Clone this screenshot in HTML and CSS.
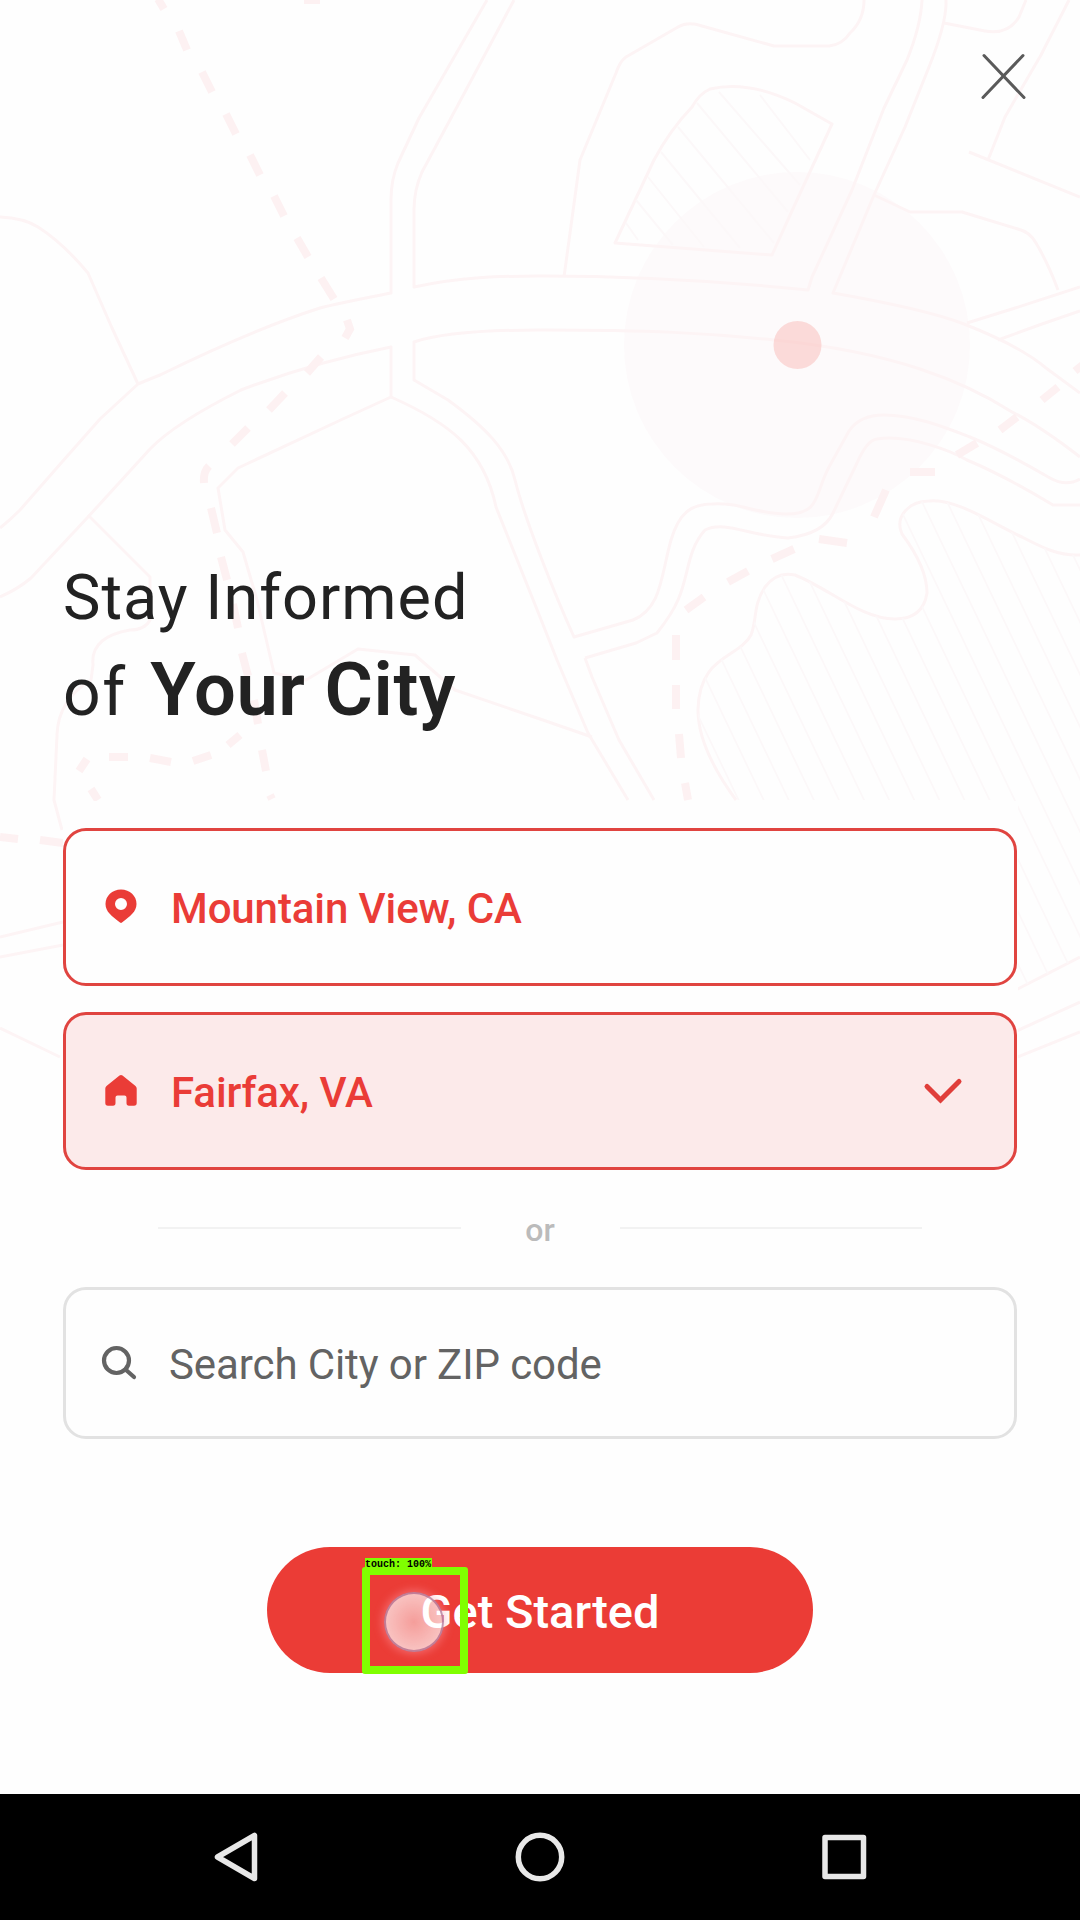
FILE: index.html
```html
<!DOCTYPE html>
<html lang="en">
<head>
<meta charset="utf-8">
<title>Stay Informed of Your City</title>
<link rel="stylesheet" href="styles.css">
</head>
<body>
<div class="screen">
  <svg class="map" viewBox="0 0 1080 1200" aria-hidden="true">
    <defs>
      <pattern id="hatch" width="25.1" height="40" patternUnits="userSpaceOnUse" patternTransform="translate(838 800) skewX(25.6)">
        <path class="hatch" d="M1 0V40"/>
      </pattern>
    </defs>
    <circle class="halo" cx="797" cy="345" r="173"/>
    <g class="roads">
      <path d="M487 0L419 118L398 163Q391 180 391 200V293C350 301 334 304 320 308C270 324 207 352 160 375C145 381 138 384 138 384L100 419L62 462L20 510Q10 520 0 528"/>
      <path d="M514 0L466 90L422 172Q414 190 414 210V287C460 277 500 276 540 276C625 276 710 280 808 290L812 277L852 190L884 108L907 60Q921 25 922 0"/>
      <path d="M946 0Q947 22 929 67L905 127L874 195L833 293Q925 309 964 324Q1020 346 1046 368L1080 393"/>
      <path d="M944 23L985 31Q1008 35 1019 17L1026 0M1069 0L1041 55L1005 117L988 160M969 152L1080 197M874 195L910 212H962L1018 229Q1030 232 1036 243Q1048 263 1058 290M967 323L1012 309L1080 287M998 340L1042 324L1080 311"/>
      <path d="M0 597Q18 589 31 578L88 517L150 449Q175 423 241 390C270 379 320 361 391 347V397L345 418L238 468L218 488L225 530L243 552L257 600L274 673L306 680L358 649L415 655L455 690L540 719L592 737"/>
      <path d="M391 397C450 423 484 450 496 507L540 617L557 660L588 733L628 800"/>
      <path d="M540 330Q450 330 414 342V380L448 400C485 427 508 450 515 480C525 520 555 595 574 637L633 620C662 608 661 575 671 540C679 513 691 504 712 504C738 502 758 514 786 514C821 514 814 495 829 467L849 431C857 419 869 415 884 415C914 415 944 427 970 437Q1002 450 1050 478Q1066 487 1080 479"/>
      <path d="M585 658L636 643L657 633Q672 614 678 600C689 575 687 550 705 530C725 520 749 536 788 538Q823 534 833 513L857 463Q867 440 877 439C910 434 953 452 967 460Q1005 476 1053 505H1080M585 658L592 677L619 740L654 800"/>
      <path d="M540 330C650 330 708 333 774 340C895 352 965 382 1012 412Q1040 426 1080 457"/>
      <path d="M0 217Q24 218 38 227Q63 243 88 273L112 328L138 384M88 515L150 577V620Q145 630 130 630Q90 637 93 665L91 680Q58 700 57 735L54 800L62 830M0 937L63 922M0 957L63 945M0 1028L60 1057"/>
      <path d="M564 277L580 160L616 73Q620 61 626 57L678 27Q688 21 702 26L774 46H829Q842 45 850 33Q864 20 864 0"/>
      <path d="M615 243Q633 205 654 160Q670 130 692 107Q699 94 710 89Q748 80 795 103L832 124L791 213L772 255Z"/>
      <path d="M736 800C714 770 698 738 698 710C699 655 738 659 751 635C757 620 753 605 765 587Q777 571 795 575C830 589 861 619 895 619Q923 619 927 593C927 575 917 554 902 534C894 516 910 501 929 501C956 497 1000 528 1022 537C1043 548 1059 556 1080 555"/>
      <path d="M1010 993L1080 957M1010 1034L1080 1002M1010 1060L1080 1032"/>
    </g>
    <path class="park-fill" d="M736 800C714 770 698 738 698 710C699 655 738 659 751 635C757 620 753 605 765 587Q777 571 795 575C830 589 861 619 895 619Q923 619 927 593C927 575 917 554 902 534C894 516 910 501 929 501C956 497 1000 528 1022 537C1043 548 1059 556 1080 555V957L1010 993V800Z"/>
    <path class="hatch" d="M760 95L810 160M719 92L800 185M697 103L788 212M678 127L774 243M661 152L740 248M648 177L704 247M636 200L673 245M626 223L638 240"/>
    <g class="dashes">
      <path d="M158 -1L164 9M179 31L187 50M202 72L212 92M226 114L236 134M250 155L260 175M274 196L284 216M297 238L308 257M321 278L334 299M304 0H320"/>
      <path d="M347 320L350 329L345 338M321 357L307 373M285 393L269 410M248 428L232 444M209 466Q203 472 204 483M211 508L217 533M221 557L227 580M233 604L238 628M242 653L248 676M254 700L258 724M262 750L266 771M270 795L272 799"/>
      <path d="M240 735L228 745M211 755L193 761M171 762L150 758M128 757H109M87 759L79 771M91 789L98 800M0 837L18 839M40 840L63 843"/>
      <path d="M688 800L685 783M681 758L679 734M676 709V685M676 660V635M686 610L704 597M728 582L748 571M772 559L794 549M819 539L847 543M874 517L886 490M910 472H935M957 455L977 443M1000 430L1017 417M1042 400L1058 387M1075 371L1085 363"/>
    </g>
    <circle class="pin" cx="797.5" cy="345" r="24"/>
    <path class="cover" d="M63 801H1018V1200H63Z"/>
  </svg>

  <header class="top">
    <button class="close" aria-label="Close">
      <svg width="46" height="48" viewBox="0 0 46 48"><path d="M3 2.500L43 44.500M42 2.500L2 44.500"/></svg>
    </button>
  </header>

  <main class="content">
    <h1 class="title">Stay Informed<br><span class="of">of</span> <strong>Your City</strong></h1>

    <div class="choices">
      <button class="choice">
        <svg class="icon" width="32" height="36" viewBox="0 0 32 36"><path fill-rule="evenodd" d="M16 0.500C7 0.500 0.500 7 0.500 15C0.500 23 7 27 15 33.500Q16 34.300 17 33.500C25 27 31.500 23 31.500 15C31.500 7 25 .5 16 .5ZM16 9A6 6 0 1 1 16 21A6 6 0 1 1 16 9Z"/></svg>
        <span class="city">Mountain View, CA</span>
      </button>
      <button class="choice selected">
        <svg class="icon" width="32" height="36" viewBox="0 0 32 36"><path d="M14.500 2.500Q16 1.300 17.500 2.500L30.500 13Q31.700 14 31.700 15.500V30Q31.700 32.700 29 32.700H24Q21.500 32.700 21.500 30V24.500Q21.500 22.500 19.500 22.500H12.500Q10.500 22.500 10.500 24.500V30Q10.500 32.700 8 32.700H3Q.3 32.700 .3 30V15.500Q.3 14 1.500 13Z"/></svg>
        <span class="city">Fairfax, VA</span>
        <svg class="check" width="40" height="28" viewBox="0 0 40 28"><path d="M4 9.500L17.500 23L36 4.500"/></svg>
      </button>
    </div>

    <div class="divider"><span class="or">or</span></div>

    <label class="search">
      <svg class="glass" width="36" height="36" viewBox="0 0 36 36"><circle cx="15.500" cy="15.500" r="12.500"/><path d="M24.500 24.500L33 32"/></svg>
      <span class="hint">Search City or ZIP code</span>
    </label>

    <button class="start">Get Started
      <span class="touch-dot"></span>
      <span class="touch-box"><span class="touch-label">touch: 100%</span></span>
    </button>
  </main>

  <nav class="navbar">
    <svg width="50" height="54" viewBox="0 0 50 54"><path d="M6.500 27L43.500 5.500V48.500Z"/></svg>
    <svg width="54" height="54" viewBox="0 0 54 54"><circle cx="27" cy="27" r="21.700"/></svg>
    <svg width="50" height="54" viewBox="0 0 50 54"><path d="M6 7.500H44.500V46.500H6Z"/></svg>
  </nav>
</div>
</body>
</html>
```
FILE: styles.css
```css
* { box-sizing: border-box; }

body {
  margin: 0;
  background: #fefefe;
  font-family: Roboto, "Liberation Sans", sans-serif;
}

button {
  font: inherit;
  background: none;
  border: 0;
  padding: 0;
}

.screen {
  position: relative;
  width: 1080px;
  height: 1920px;
  display: flex;
  flex-direction: column;
  overflow: hidden;
}

/* Decorative map behind the content */
.map {
  position: absolute;
  inset: 0 0 auto 0;
  width: 1080px;
  height: 1200px;
}
.halo { fill: #fdfafb; }
.pin { fill: #f9b8b3; fill-opacity: .48; }
.roads { fill: none; stroke: #fdf4f5; stroke-width: 3; stroke-linejoin: round; }
.hatch { fill: none; stroke: #fcf8f9; stroke-width: 2; }
.park-fill { fill: url(#hatch); }
.dashes { fill: none; stroke: #fdf1f2; stroke-width: 8; }
.cover { fill: #fefefe; }

.top {
  position: relative;
  height: 550px;
  padding: 53px 53px 0 0;
  display: flex;
  justify-content: flex-end;
  align-items: flex-start;
}
.close { display: flex; }
.close path { fill: none; stroke: #5a5a5a; stroke-width: 3; stroke-linecap: round; }

.content {
  position: relative;
  flex: 1;
  padding: 0 63px;
  display: flex;
  flex-direction: column;
}

.title {
  margin: 0;
  height: 278px;
  font-size: 63px;
  font-weight: 400;
  line-height: 96px;
  letter-spacing: 1px;
  color: #222;
}
.of { font-size: 66px; line-height: 0; letter-spacing: 1.5px; }
.title strong {
  margin-left: 7px;
  font-size: 74px;
  font-weight: 600;
  line-height: 0;
  letter-spacing: .6px;
}

.choices { display: flex; flex-direction: column; gap: 26px; }
.choice {
  height: 158px;
  padding: 0 51px 0 38.500px;
  display: flex;
  align-items: center;
  gap: 34.500px;
  border: 3px solid #e04440;
  border-radius: 23px;
  background: #fefefe;
  color: #ea3c37;
}
.choice.selected { background: #fceaea; }
.icon { fill: #ea3c37; }
.city { font-size: 42px; font-weight: 500; line-height: 50px; letter-spacing: -.1px; padding-top: 4px; }
.check { margin-left: auto; fill: none; stroke: #e03e3a; stroke-width: 5; stroke-linecap: round; }

.divider {
  height: 117px;
  padding: 0 95px 1px;
  display: flex;
  align-items: center;
  color: #bbb;
  font-size: 32px;
  font-weight: 500;
}
.divider::before, .divider::after {
  content: "";
  flex: 1;
  height: 2px;
  background: #f2f2f2;
}
.or { width: 159px; text-align: center; line-height: 38px; padding-top: 4px; }

.search {
  height: 152px;
  padding: 0 34.500px;
  display: flex;
  align-items: center;
  gap: 32.500px;
  border: 3px solid #e2e2e2;
  border-radius: 23px;
  background: #fefefe;
}
.glass { fill: none; stroke: #636363; stroke-width: 4.2; stroke-linecap: round; }
.hint { font-size: 42px; line-height: 50px; letter-spacing: -.1px; padding-top: 3px; color: #636363; }

.start {
  position: relative;
  align-self: center;
  width: 546px;
  height: 126px;
  margin-top: 108px;
  padding-top: 4px;
  border-radius: 63px;
  background: #eb3c36;
  color: #fff;
  font-size: 47px;
  font-weight: 500;
  line-height: 56px;
}

/* Touch indicator lying over the button */
.touch-dot {
  position: absolute;
  left: 117px;
  top: 45px;
  width: 60px;
  height: 60px;
  border: 2px solid rgba(165, 90, 130, .65);
  border-radius: 50%;
  background: radial-gradient(circle, rgba(255, 255, 255, .5), rgba(255, 255, 255, .7) 75%);
  box-shadow: 0 0 9px 2px rgba(255, 160, 170, .45);
}
.touch-box {
  position: absolute;
  left: 95px;
  top: 20px;
  width: 106px;
  height: 107px;
  border: 8px solid #80ff00;
  border-radius: 3px;
}
.touch-label {
  position: absolute;
  left: -5px;
  top: -17px;
  width: 67px;
  height: 13px;
  background: #80ff00;
  color: #000;
  font: bold 10px/14px "Liberation Mono", monospace;
  text-align: left;
  white-space: nowrap;
}

.navbar {
  position: relative;
  height: 126px;
  padding: 0 211px;
  display: flex;
  align-items: center;
  justify-content: space-between;
  background: #000;
}
.navbar svg { fill: none; stroke: #e8e8e8; stroke-width: 5.5; stroke-linejoin: round; }
```
